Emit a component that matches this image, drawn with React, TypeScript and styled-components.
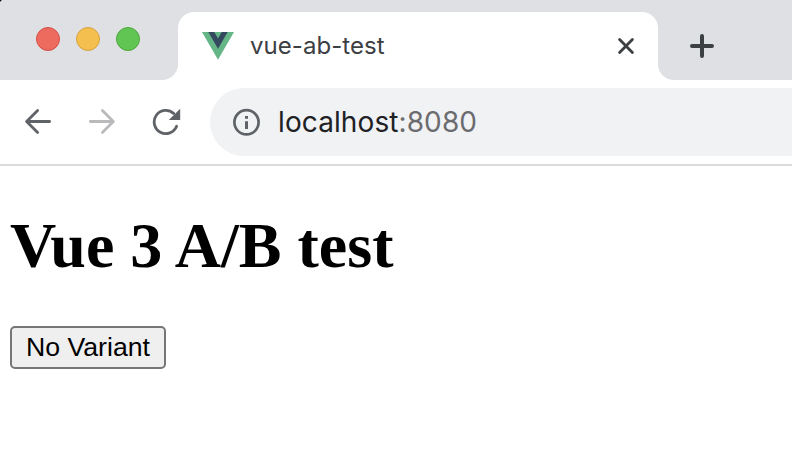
import React from "react";
import styled, { createGlobalStyle } from "styled-components";

const GlobalStyle = createGlobalStyle`
  body { margin: 0; background: #fff; overflow: hidden; }
  * { box-sizing: border-box; }
  svg { display: block; flex: none; }
`;

const Browser = styled.div`
  display: flex;
  flex-direction: column;
  height: 460px;
  overflow: hidden;
  background: #fff;
`;

const TabStrip = styled.header`
  display: flex;
  height: 80px;
  background: radial-gradient(circle at 0 0, #111 1px, transparent 2px), #dfe0e4;
`;

const WindowControls = styled.div`
  display: flex;
  gap: 16px;
  width: 178px;
  padding: 27px 0 0 36px;
`;

const Light = styled.span<{ $fill: string; $edge: string }>`
  width: 24px;
  height: 24px;
  border-radius: 50%;
  background: ${(p) => p.$fill};
  border: 1px solid ${(p) => p.$edge};
`;

const Tab = styled.div`
  position: relative;
  display: flex;
  align-items: center;
  width: 480px;
  height: 68px;
  margin-top: 12px;
  padding: 0 22px 0 24px;
  border-radius: 16px 16px 0 0;
  background: #fff;

  &::before,
  &::after {
    content: "";
    position: absolute;
    bottom: 0;
    width: 16px;
    height: 16px;
  }
  &::before {
    right: 100%;
    background: radial-gradient(circle at 0 0, transparent 15.5px, #fff 16.5px);
  }
  &::after {
    left: 100%;
    background: radial-gradient(circle at 100% 0, transparent 15.5px, #fff 16.5px);
  }
`;

const TabTitle = styled.span`
  flex: 1;
  margin-left: 16px;
  font: 400 24px/32px Inter, sans-serif;
  letter-spacing: 0.05px;
  color: #3c4043;
  white-space: nowrap;
`;

const NewTab = styled.div`
  padding: 34px 0 0 32px;
`;

const Toolbar = styled.nav`
  display: flex;
  align-items: center;
  height: 86px;
  padding-left: 24px;
  border-bottom: 2px solid #dadadb;
`;

const NavIcons = styled.div`
  display: flex;
  gap: 36px;
  width: 186px;
`;

const AddressBar = styled.div`
  display: flex;
  align-items: center;
  flex: 1;
  height: 68px;
  padding-left: 22px;
  border-radius: 34px 0 0 34px;
  background: #f1f2f4;
`;

const Url = styled.span`
  margin-left: 17px;
  font: 400 28px/36px Inter, sans-serif;
  letter-spacing: 0.1px;
  color: #202124;
  white-space: nowrap;
`;

const Port = styled.span`
  color: #6b6c6f;
`;

const Page = styled.main`
  display: flex;
  flex-direction: column;
  align-items: flex-start;
  padding: 43px 10px 0;
`;

const Heading = styled.h1`
  margin: 0;
  font: 700 64px/74px "Liberation Serif", serif;
  color: #000;
  white-space: nowrap;
`;

const VariantButton = styled.button`
  width: 156px;
  height: 43px;
  margin: 43px 0 0;
  padding: 0 0 2px;
  border: 2px solid #767676;
  border-radius: 5px;
  background: #efefef;
  font: 400 26.67px/36px "Liberation Sans", sans-serif;
  color: #000;
  white-space: nowrap;
`;

const stroke = { fill: "none", strokeLinecap: "round", strokeLinejoin: "round" } as const;

const VueLogo = () => (
  <svg width="32" height="28" viewBox="0 0 32 28">
    <path d="M0 0h32L16 27.7z" fill="#64b687" />
    <path d="M6.3 0h6L16 6.4 19.7 0h6L16 16.7z" fill="#35495e" />
  </svg>
);

const CloseIcon = () => (
  <svg width="20" height="20" viewBox="0 0 20 20">
    <path d="M3.6 3.4 16.4 16.4M16.4 3.4 3.6 16.4" stroke="#3c4043" strokeWidth="2.8" {...stroke} />
  </svg>
);

const PlusIcon = () => (
  <svg width="24" height="24" viewBox="0 0 24 24">
    <path d="M12 2v20M2 12h20" stroke="#3c4043" strokeWidth="4" {...stroke} />
  </svg>
);

const BackIcon = () => (
  <svg width="28" height="28" viewBox="0 0 28 28">
    <path d="M25.6 13.5H2.8M13.6 2.5 2.6 13.5l11 11" stroke="#5f6368" strokeWidth="2.8" {...stroke} />
  </svg>
);

const ForwardIcon = () => (
  <svg width="28" height="28" viewBox="0 0 28 28">
    <path d="M2.4 13.5h22.8M14.4 2.5l11 11-11 11" stroke="#bababc" strokeWidth="2.8" {...stroke} />
  </svg>
);

const ReloadIcon = () => (
  <svg width="30" height="28" viewBox="0 0 30 28">
    <path d="M24.6 18.2A11.6 11.6 0 1 1 21.6 5.4" stroke="#5f6368" strokeWidth="2.8" {...stroke} />
    <path d="M28.2 .8V12.1H16.8z" fill="#5f6368" />
  </svg>
);

const InfoIcon = () => (
  <svg width="29" height="28" viewBox="0 0 29 28">
    <circle cx="14.5" cy="14.3" r="12.1" fill="none" stroke="#5f6368" strokeWidth="2.7" />
    <path d="M13 8h3v2.8h-3zM13 13.3h3v7.7h-3z" fill="#5f6368" />
  </svg>
);

export default function App() {
  return (
    <Browser>
      <GlobalStyle />
      <TabStrip>
        <WindowControls>
          <Light $fill="#ec6a5e" $edge="#d35047" />
          <Light $fill="#f4bf4f" $edge="#d6a243" />
          <Light $fill="#61c554" $edge="#4fa73e" />
        </WindowControls>
        <Tab>
          <VueLogo />
          <TabTitle>vue-ab-test</TabTitle>
          <CloseIcon />
        </Tab>
        <NewTab>
          <PlusIcon />
        </NewTab>
      </TabStrip>
      <Toolbar>
        <NavIcons>
          <BackIcon />
          <ForwardIcon />
          <ReloadIcon />
        </NavIcons>
        <AddressBar>
          <InfoIcon />
          <Url>
            localhost<Port>:8080</Port>
          </Url>
        </AddressBar>
      </Toolbar>
      <Page>
        <Heading>Vue 3 A/B test</Heading>
        <VariantButton>No Variant</VariantButton>
      </Page>
    </Browser>
  );
}
